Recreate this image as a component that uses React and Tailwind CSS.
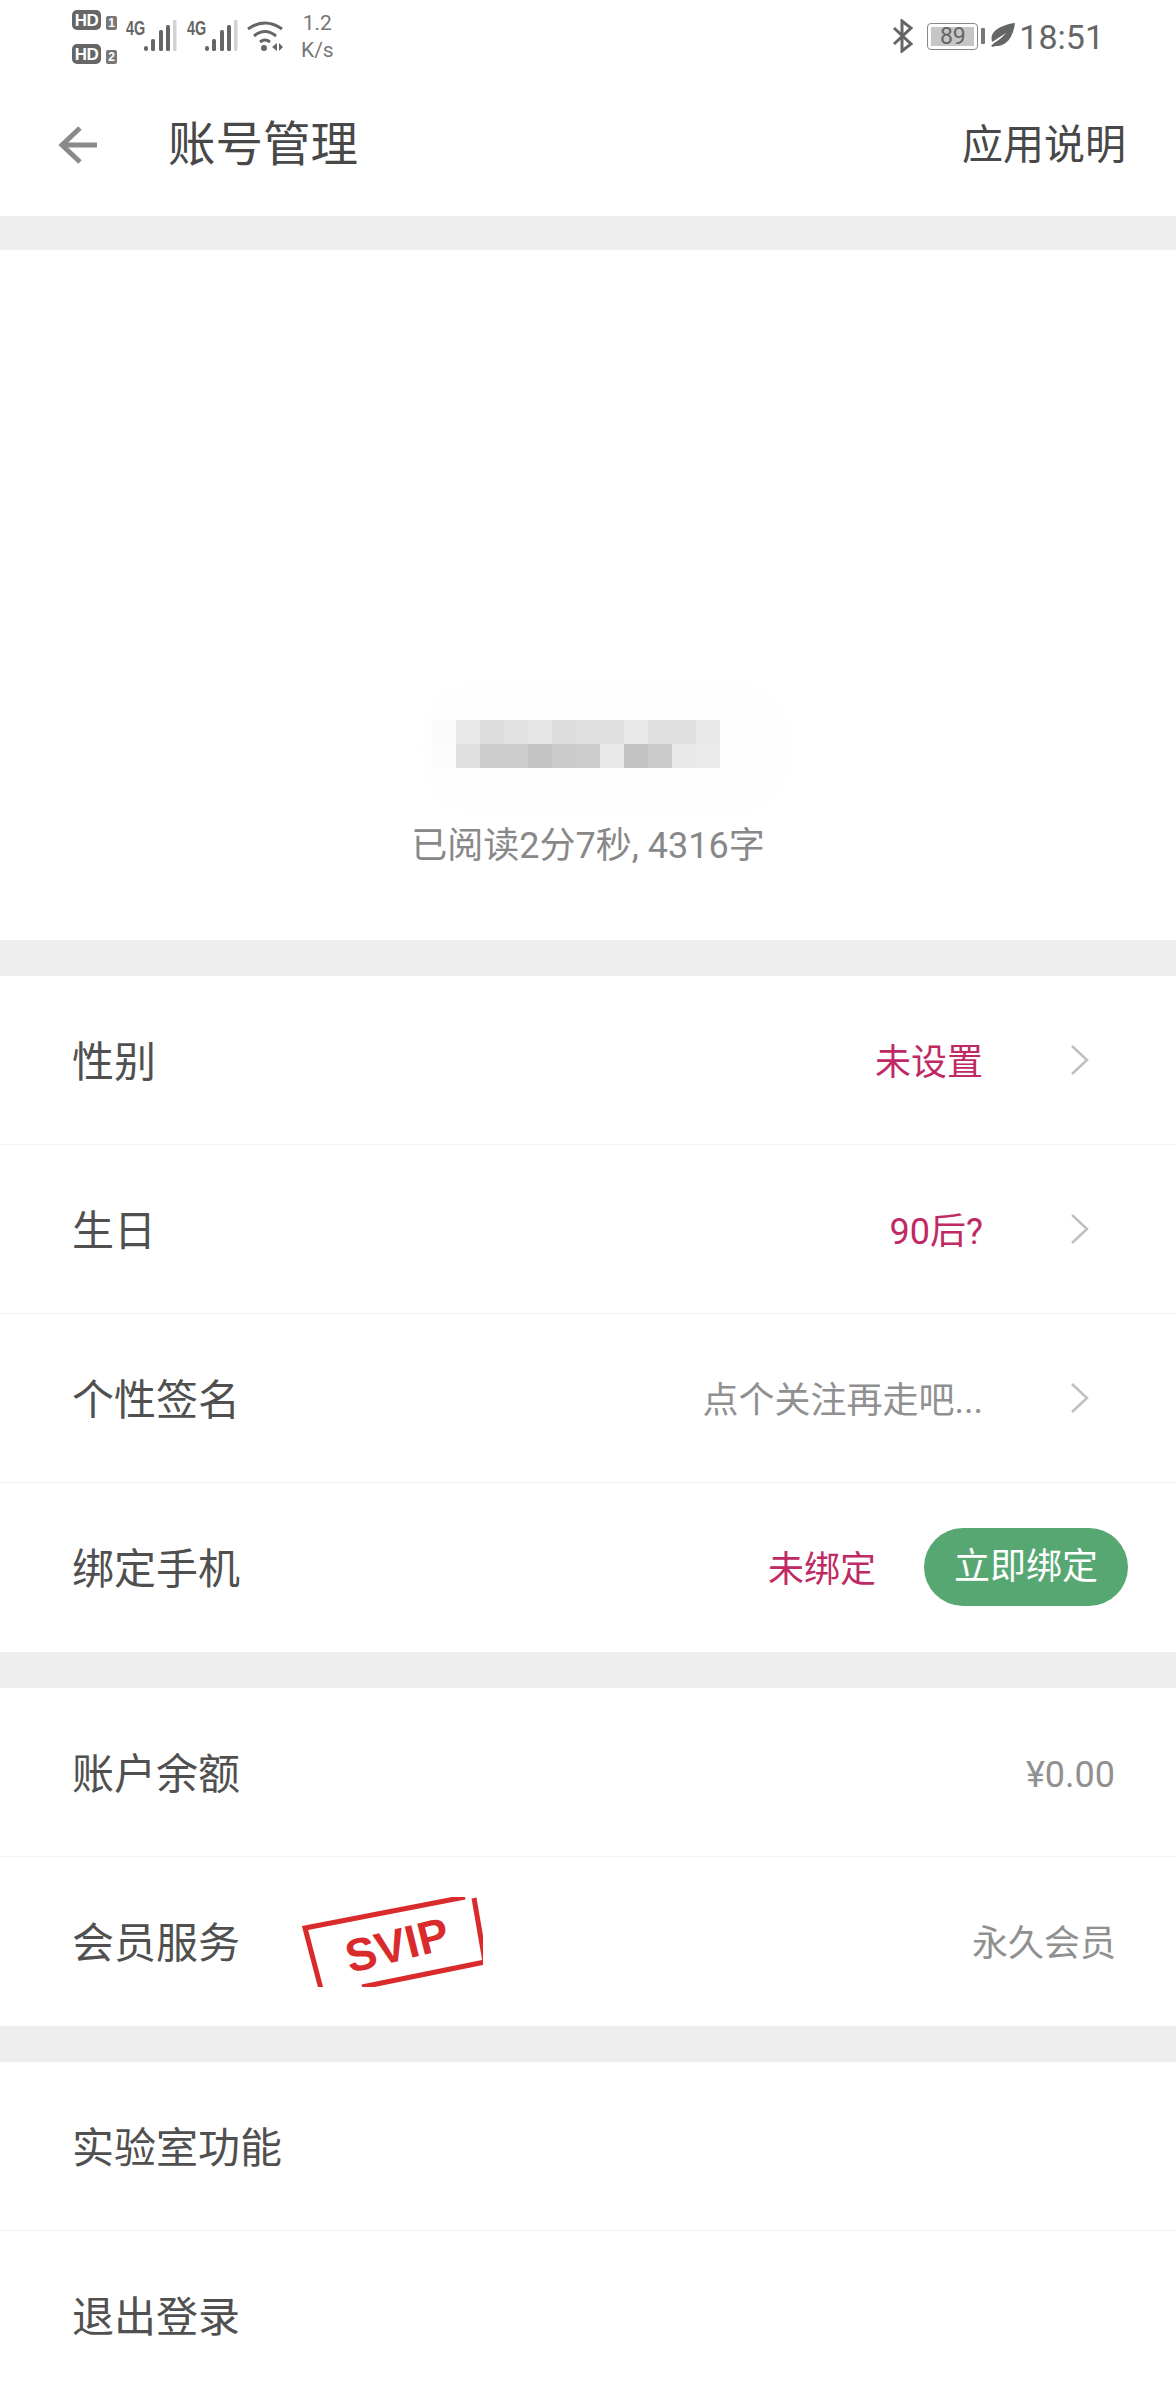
const cjk = "font-['Roboto','Noto_Sans_CJK_SC',sans-serif]";

const mosaicTop = ['#fafafa', '#e8e8e8', '#dcdcdc', '#e2e2e2', '#e6e6e6', '#dcdcdc', '#e0e0e0', '#e0e0e0', '#e8e8e8', '#e0e0e0', '#e0e0e0', '#e8e8e8'];
const mosaicBottom = ['#fcfcfc', '#e0e0e0', '#cdcdcd', '#cdcdcd', '#c4c4c4', '#cccccc', '#cdcdcd', '#e8e8e8', '#c2c2c2', '#cccccc', '#e8e8e8', '#eaeaea'];

function Signal() {
  return (
    <svg width="33" height="32" viewBox="0 0 33 32" className="-ml-px">
      <rect x="0" y="26" width="4" height="5" rx="2" fill="#666" />
      <rect x="7" y="19" width="4" height="12" rx="1.5" fill="#666" />
      <rect x="15" y="10" width="4" height="21" rx="1.5" fill="#666" />
      <rect x="22" y="5" width="4" height="26" rx="1.5" fill="#666" />
      <rect x="29" y="0" width="3.5" height="31" rx="1" fill="#d2d2d2" />
    </svg>
  );
}

function FourG() {
  return (
    <span className="w-[19px] origin-left scale-x-[0.72] font-['Liberation_Sans',sans-serif] text-[20px] leading-[17px] font-bold text-[#666]">
      4G
    </span>
  );
}

function HdBadge({ n }) {
  return (
    <div className="flex items-end gap-[5px]">
      <span className="flex h-[20px] w-[29px] items-center justify-center rounded-[5px] bg-[#666] font-['Liberation_Sans',sans-serif] text-[17px] leading-none font-bold tracking-[-0.5px] text-white">
        HD
      </span>
      <span className="flex h-[14px] w-[11px] items-center justify-center rounded-[2px] bg-[#777] font-['Liberation_Sans',sans-serif] text-[12px] leading-none font-bold text-white">
        {n}
      </span>
    </div>
  );
}

function StatusBar() {
  return (
    <div className="flex h-[72px] items-start justify-between pr-[72px] pl-[72px]">
      <div className="flex items-start">
        <div className="flex flex-col gap-[14px] pt-[10px]">
          <HdBadge n="1" />
          <HdBadge n="2" />
        </div>
        <div className="mt-[20px] ml-[9px] flex w-[61px] items-start">
          <FourG />
          <Signal />
        </div>
        <div className="mt-[20px] flex w-[59px] items-start">
          <FourG />
          <Signal />
        </div>
        <svg width="38" height="32" viewBox="0 0 38 32" fill="none" className="mt-[20px]">
          <path d="M2 9 Q19 -3 36 9" stroke="#666" strokeWidth="3" />
          <path d="M8 16 Q19 7 30 16" stroke="#666" strokeWidth="3" />
          <path d="M14 22 Q19 18 24 22" stroke="#666" strokeWidth="3" />
          <circle cx="18" cy="28" r="3" fill="#666" />
          <path d="M31 23v8l-5-4zM33 23v8l4-4z" fill="#666" />
        </svg>
        <div className={`mt-[11px] ml-[17px] flex flex-col items-center gap-[2px] ${cjk} text-[21px] leading-[25px] text-[#777]`}>
          <span>1.2</span>
          <span>K/s</span>
        </div>
      </div>
      <div className="flex items-start">
        <svg width="22" height="34" viewBox="0 0 22 34" fill="none" className="mt-[19px]">
          <path d="M2 9 L19 25 L10 32 V2 L19 9 L2 25" stroke="#666" strokeWidth="3" />
        </svg>
        <div className="mt-[23px] ml-[13px] flex h-[27px] w-[51px] items-center justify-center rounded-[4px] border border-[#888] px-[3px]">
          <span className={`flex h-[19px] w-full items-center justify-center bg-[#c6c6c6] ${cjk} text-[23px] leading-none text-[#666]`}>89</span>
        </div>
        <span className="mt-[28px] ml-[3px] h-[16px] w-[4px] rounded-[1px] bg-[#777]" />
        <svg width="24" height="24" viewBox="0 0 24 24" className="mt-[23px] ml-[6px]">
          <path d="M24 0 C22 16 14 24 4 23 L2 24 L0 23 L3 20 C10 16 12 13 15 10 C10 13 6 16 1 19 C-2 8 10 2 24 0Z" fill="#666" />
        </svg>
        <span className={`mt-[17px] ml-[4px] ${cjk} text-[34px] leading-[40px] text-[#666]`}>18:51</span>
      </div>
    </div>
  );
}

function Header() {
  return (
    <div className={`flex h-[144px] items-center pr-[50px] pl-[58px] ${cjk}`}>
      <svg width="40" height="40" viewBox="0 0 40 40" fill="none" stroke="#8a8a8a" strokeWidth="5" className="mt-[1px]">
        <path d="M39 20H4" />
        <path d="M22 3L4 20L22 37" />
      </svg>
      <h1 className="mt-[3px] ml-[70px] text-[47.5px] leading-none font-normal text-[#484848]">账号管理</h1>
      <span className="mt-[3px] ml-auto text-[41px] leading-none text-[#484848]">应用说明</span>
    </div>
  );
}

function Chevron() {
  return (
    <svg width="20" height="32" viewBox="0 0 20 32" fill="none" stroke="#c0c0c0" strokeWidth="2.5" className="mr-[86px] ml-[87px]">
      <path d="M2 2L17 16L2 30" />
    </svg>
  );
}

function Row({ label, last, children }) {
  return (
    <div className={`flex h-[169px] items-center pl-[72px] ${last ? '' : 'border-b border-[#f2f2f2]'}`}>
      <span className="pt-[5px] text-[42px] leading-none text-[#505050]">{label}</span>
      {children}
    </div>
  );
}

function Gap({ h }) {
  return <div className={`${h} bg-[#eeeeee]`} />;
}

export default function App() {
  return (
    <div className={`h-[2400px] w-[1176px] overflow-hidden bg-white ${cjk}`}>
      <StatusBar />
      <Header />
      <Gap h="h-[34px]" />

      <div className="flex h-[690px] flex-col items-center pt-[470px]">
        <div className="mr-[24px] w-[288px] shadow-[30px_4px_50px_30px_#fdfdfd]">
          <div className="flex">
            {mosaicTop.map((c, i) => (
              <div key={i} className="h-[24px] w-[24px]" style={{ backgroundColor: c }} />
            ))}
          </div>
          <div className="flex">
            {mosaicBottom.map((c, i) => (
              <div key={i} className="h-[24px] w-[24px]" style={{ backgroundColor: c }} />
            ))}
          </div>
        </div>
        <p className="mt-[56px] text-[36px] leading-[44px] text-[#888888]">已阅读2分7秒, 4316字</p>
      </div>

      <Gap h="h-[36px]" />

      <Row label="性别">
        <span className="ml-auto pt-[5px] text-[36px] leading-none text-[#bf2a64]">未设置</span>
        <Chevron />
      </Row>
      <Row label="生日">
        <span className="ml-auto pt-[5px] text-[36px] leading-none text-[#bf2a64]">90后?</span>
        <Chevron />
      </Row>
      <Row label="个性签名">
        <span className="ml-auto pt-[5px] text-[36px] leading-none text-[#909090]">点个关注再走吧...</span>
        <Chevron />
      </Row>
      <Row label="绑定手机" last>
        <span className="ml-auto pt-[5px] text-[36px] leading-none text-[#bf2a64]">未绑定</span>
        <span className="mr-[48px] mb-[2px] ml-[48px] flex h-[78px] w-[204px] items-center justify-center rounded-full bg-[#57a773] text-[36px] leading-none text-white">立即绑定</span>
      </Row>

      <Gap h="h-[36px]" />

      <Row label="账户余额">
        <span className="mr-[61px] ml-auto pt-[5px] text-[36px] leading-none text-[#909090]">¥0.00</span>
      </Row>
      <Row label="会员服务" last>
        <svg width="181" height="90" viewBox="0 0 181 90" className="ml-[62px]">
          <path d="M19 92L3 31L163 0" fill="none" stroke="#d92b2b" strokeWidth="5" />
          <path d="M172 1L183 65L60 90" fill="none" stroke="#d92b2b" strokeWidth="5" />
          <text x="95" y="64" textAnchor="middle" transform="rotate(-14 95 48)" fontFamily="'Liberation Sans', sans-serif" fontWeight="700" fontSize="46" fill="#d92b2b">SVIP</text>
        </svg>
        <span className="mr-[60px] ml-auto pt-[5px] text-[36px] leading-none text-[#909090]">永久会员</span>
      </Row>

      <Gap h="h-[36px]" />

      <Row label="实验室功能" />
      <Row label="退出登录" last />
    </div>
  );
}
